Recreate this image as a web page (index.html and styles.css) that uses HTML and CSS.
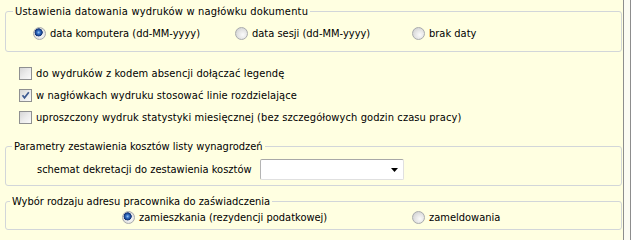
FILE: index.html
```html
<!DOCTYPE html>
<html lang="pl">
<head>
<meta charset="utf-8">
<title>Ustawienia wydruków</title>
<link rel="stylesheet" href="styles.css">
</head>
<body>
<div class="screen">
  <div class="panel">
    <fieldset class="group g1">
      <legend>Ustawienia datowania wydruków w nagłówku dokumentu</legend>
      <div class="radios r1">
        <label class="opt"><span class="radio on"></span>data komputera (dd-MM-yyyy)</label>
        <label class="opt"><span class="radio"></span>data sesji (dd-MM-yyyy)</label>
        <label class="opt"><span class="radio"></span>brak daty</label>
      </div>
    </fieldset>

    <div class="checks">
      <label class="opt"><span class="check"></span>do wydruków z kodem absencji dołączać legendę</label>
      <label class="opt"><span class="check on"><svg width="11" height="11" viewBox="0 0 11 11"><path d="M2.5 5.2 L4.5 7.8 L8.8 2.2" fill="none" stroke="#3d5a91" stroke-width="1.7"/></svg></span>w nagłówkach wydruku stosować linie rozdzielające</label>
      <label class="opt"><span class="check"></span>uproszczony wydruk statystyki miesięcznej (bez szczegółowych godzin czasu pracy)</label>
    </div>

    <fieldset class="group g2">
      <legend>Parametry zestawienia kosztów listy wynagrodzeń</legend>
      <div class="combo-row">
        <span class="combo-label">schemat dekretacji do zestawienia kosztów</span>
        <span class="combo"><svg class="arrow" width="7" height="4" viewBox="0 0 7 4"><polygon points="0,0 7,0 3.5,4" fill="#000"/></svg></span>
      </div>
    </fieldset>

    <fieldset class="group g3">
      <legend>Wybór rodzaju adresu pracownika do zaświadczenia</legend>
      <div class="radios r3">
        <label class="opt"><span class="radio on"></span>zamieszkania (rezydencji podatkowej)</label>
        <label class="opt"><span class="radio"></span>zameldowania</label>
      </div>
    </fieldset>
  </div>
  <div class="edge"></div>
</div>
</body>
</html>
```

FILE: styles.css
```css
html, body {
  margin: 0;
  padding: 0;
  background: #ffffe1;
}

body {
  font-family: "DejaVu Sans Condensed", "DejaVu Sans", sans-serif;
  font-stretch: condensed;
  font-size: 11px;
  line-height: 13px;
  color: #000;
}

.screen {
  display: flex;
  width: 631px;
  height: 240px;
  overflow: hidden;
}

.panel {
  width: 623px;
  flex: none;
  display: flex;
  flex-direction: column;
}

.edge {
  width: 6px;
  flex: none;
  border-left: 1px solid #8d8d8d;
  border-right: 1px solid #8d8d8d;
  background: #fbfbf2;
}

.group {
  margin: 0 0 0 5px;
  width: 617px;
  box-sizing: border-box;
  border: 1px solid #d2d6d9;
  border-radius: 3px;
  padding: 0;
  min-width: 0;
}

.group legend {
  padding: 0 2px;
  line-height: 13px;
}

.g1 { margin-top: 5px; padding: 9px 0 11px 0; }
.g1 legend { margin-left: 7px; letter-spacing: 0.2px; }

.g2 { margin-top: 16px; padding: 6px 0 5px 0; }
.g2 legend { margin-left: 6px; }

.g3 { margin-top: 9px; padding: 3px 0 5px 0; }
.g3 legend { margin-left: 4px; }

.opt {
  display: flex;
  align-items: center;
  height: 13px;
  white-space: nowrap;
}

.radios {
  display: grid;
}

.r1 {
  margin-left: 27px;
  grid-template-columns: 202px 177px auto;
}

.r3 {
  margin-left: 116px;
  grid-template-columns: 290px auto;
}

.radio {
  width: 13px;
  height: 13px;
  flex: none;
  box-sizing: border-box;
  border-radius: 50%;
  border: 1px solid #a9abad;
  background: radial-gradient(circle at 62% 62%, #fbfbfb 0, #e6e6e6 45%, #c9cacb 100%);
  margin-right: 4px;
}

.radio.on {
  background:
    radial-gradient(circle at 42% 40%, #9cc6f2 0, #3a78cc 1.5px, #1b4591 3px, #123270 3.8px, rgba(18,50,112,0) 4.3px),
    radial-gradient(circle at 62% 62%, #fbfbfb 0, #e6e6e6 45%, #c9cacb 100%);
}

.checks {
  margin-top: 15px;
  padding-left: 19px;
  display: flex;
  flex-direction: column;
  gap: 9px;
  letter-spacing: 0.1px;
}

.check {
  width: 13px;
  height: 13px;
  flex: none;
  box-sizing: border-box;
  border: 1px solid #8f9091;
  background: linear-gradient(135deg, #d6d6d6 0%, #ebebeb 50%, #fafafa 100%);
  margin-right: 4px;
  display: flex;
  align-items: center;
  justify-content: center;
}

.combo-row {
  display: flex;
  align-items: center;
  margin-left: 31px;
  height: 21px;
}

.combo-label {
  width: 223px;
  flex: none;
  white-space: nowrap;
}

.combo {
  width: 144px;
  height: 21px;
  flex: none;
  box-sizing: border-box;
  background: #fff;
  border: 1px solid #e0e0e0;
  border-top-color: #a8a8a8;
  border-left-color: #b4b4b4;
  border-radius: 2px;
  display: flex;
  align-items: center;
  justify-content: flex-end;
  padding-right: 5px;
}

.arrow {
  display: block;
}
```
